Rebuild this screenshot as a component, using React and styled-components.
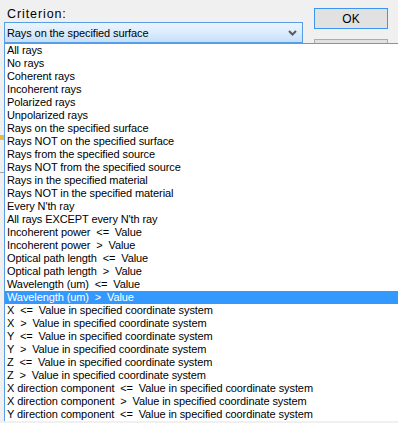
import React from 'react';
import styled, { createGlobalStyle } from 'styled-components';

const GlobalStyle = createGlobalStyle`
  html, body {
    margin: 0;
    padding: 0;
    background: #f0f0f0;
  }
  body {
    font-family: 'Liberation Sans', Arial, sans-serif;
    font-size: 11px;
    color: #000;
  }
`;

const Dialog = styled.div`
  position: relative;
  width: 398px;
  height: 423px;
  overflow: hidden;
  background: #f0f0f0;
`;

const TopRow = styled.div`
  display: flex;
  justify-content: space-between;
  padding: 8px 10px 0 4px;
`;

const Field = styled.div`
  display: flex;
  flex-direction: column;
  width: 299px;
`;

const Label = styled.div`
  height: 14px;
  padding-left: 3px;
  font-size: 12.5px;
  letter-spacing: 0.9px;
  line-height: 12px;
  color: #000;
`;

const Combo = styled.div`
  box-sizing: border-box;
  display: flex;
  align-items: center;
  justify-content: space-between;
  height: 21px;
  padding: 0 5px 0 2px;
  border: 1px solid #569de5;
  background: linear-gradient(#ecf4fc, #dcecfc 50%, #c4e0fc);
  font-size: 11px;
  letter-spacing: -0.1px;
`;

const Chevron = () => (
  <svg width="9" height="6" viewBox="0 0 9 6">
    <path d="M1 1 L4.5 4.5 L8 1" fill="none" stroke="#5a5a5a" strokeWidth="2" />
  </svg>
);

const Buttons = styled.div`
  display: flex;
  flex-direction: column;
  gap: 10px;
`;

const Button = styled.div`
  box-sizing: border-box;
  width: 74px;
  height: 21px;
  display: flex;
  align-items: center;
  justify-content: center;
  font-size: 12px;
  background: #e1e1e1;
  border: 1px solid ${p => (p.$default ? '#3c96f0' : '#adadad')};
`;

const Hidden = styled.div`
  position: absolute;
  left: 0;
  width: 4px;
  top: ${p => p.$top}px;
  height: ${p => p.$h}px;
  background: ${p => p.$color};
`;

const DropList = styled.ul`
  position: absolute;
  top: 43px;
  left: 4px;
  width: 420px;
  margin: 0;
  padding: 0;
  list-style: none;
  background: #fff;
  border-top: 1px solid #569de5;
  border-left: 1px solid #569de5;
`;

const Item = styled.li`
  height: 13px;
  line-height: 13px;
  padding-left: 2px;
  white-space: pre;
  letter-spacing: -0.1px;
  background: ${p => (p.$selected ? '#3399ff' : 'transparent')};
  color: ${p => (p.$selected ? '#fff' : '#000')};
`;

const items = [
  'All rays',
  'No rays',
  'Coherent rays',
  'Incoherent rays',
  'Polarized rays',
  'Unpolarized rays',
  'Rays on the specified surface',
  'Rays NOT on the specified surface',
  'Rays from the specified source',
  'Rays NOT from the specified source',
  'Rays in the specified material',
  'Rays NOT in the specified material',
  "Every N'th ray",
  "All rays EXCEPT every N'th ray",
  'Incoherent power  <=  Value',
  'Incoherent power  >  Value',
  'Optical path length  <=  Value',
  'Optical path length  >  Value',
  'Wavelength (um)  <=  Value',
  'Wavelength (um)  >  Value',
  'X  <=  Value in specified coordinate system',
  'X  >  Value in specified coordinate system',
  'Y  <=  Value in specified coordinate system',
  'Y  >  Value in specified coordinate system',
  'Z  <=  Value in specified coordinate system',
  'Z  >  Value in specified coordinate system',
  'X direction component  <=  Value in specified coordinate system',
  'X direction component  >  Value in specified coordinate system',
  'Y direction component  <=  Value in specified coordinate system',
];

export default function App() {
  return (
    <Dialog>
      <GlobalStyle />
      <TopRow>
        <Field>
          <Label>Criterion:</Label>
          <Combo>
            <span>Rays on the specified surface</span>
            <Chevron />
          </Combo>
        </Field>
        <Buttons>
          <Button $default>OK</Button>
          <Button>Cancel</Button>
        </Buttons>
      </TopRow>
      <Hidden $top={135} $h={5} $color="#e8b84a" />
      <Hidden $top={172} $h={1} $color="#a0a0a0" />
      <DropList>
        {items.map((t, i) => (
          <Item key={i} $selected={i === 19}>{t}</Item>
        ))}
      </DropList>
    </Dialog>
  );
}
